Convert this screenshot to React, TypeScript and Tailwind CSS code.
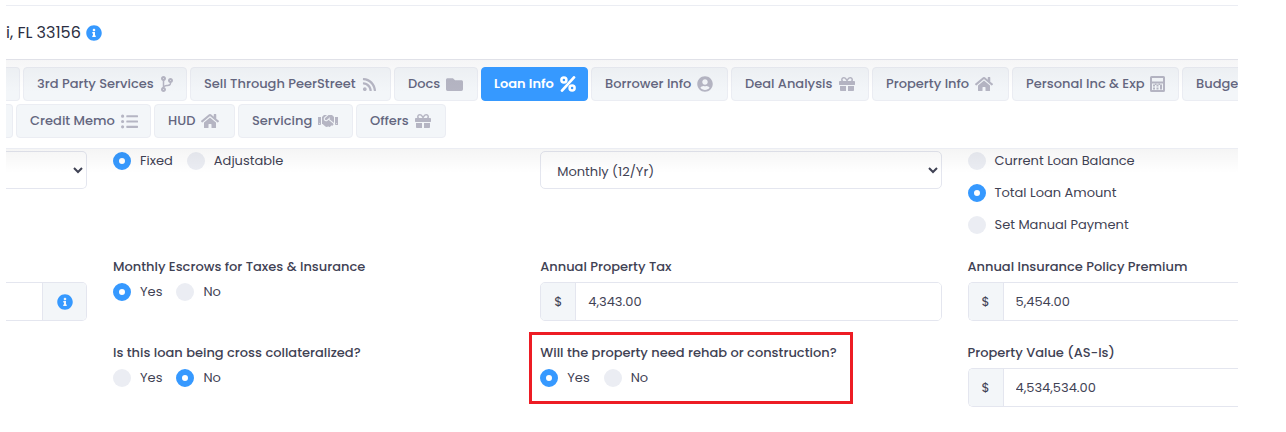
import React from "react";
import {
  FaCodeBranch,
  FaFolder,
  FaGift,
  FaHandshake,
  FaHome,
  FaInfoCircle,
  FaListUl,
  FaRss,
  FaUserCircle,
} from "react-icons/fa";

function CalculatorIcon({ className }: { className?: string }) {
  return (
    <svg viewBox="0 0 15 16" className={className} fill="currentColor" aria-hidden="true">
      <path
        fillRule="evenodd"
        d="M1.5 0h12A1.5 1.5 0 0 1 15 1.500v13a1.500 1.500 0 0 1-1.500 1.500h-12A1.500 1.500 0 0 1 0 14.500v-13A1.500 1.500 0 0 1 1.500 0ZM2 2v3.500h11V2ZM2 7.500V14h11V7.500Z"
      />
      <path d="M3 8.500h2v2H3zM6.500 8.500h2v2h-2zM10 8.500h2v5h-2zM3 11.500h2v2H3zM6.500 11.500h2v2h-2z" />
      <path d="M5 7.500h1.500V9H5zM8.500 7.500H10V9H8.500z" />
    </svg>
  );
}

function PercentIcon({ className }: { className?: string }) {
  return (
    <svg viewBox="0 0 16 16" className={className} fill="none" stroke="currentColor" aria-hidden="true">
      <circle cx="3.900" cy="3.900" r="2.500" strokeWidth="2.500" />
      <circle cx="12.100" cy="12.100" r="2.500" strokeWidth="2.500" />
      <path d="M14 1.400 2 14.600" strokeWidth="2.700" strokeLinecap="round" />
    </svg>
  );
}

type Tab = {
  label: string;
  width: string;
  icon: React.ComponentType<{ className?: string }>;
  iconSize?: string;
  active?: boolean;
};

const firstRow: Tab[] = [
  { label: "3rd Party Services", width: "w-[164px]", icon: FaCodeBranch, iconSize: "h-4 w-[14px]" },
  { label: "Sell Through PeerStreet", width: "w-[201px]", icon: FaRss, iconSize: "size-[15px]" },
  { label: "Docs", width: "w-[84px]", icon: FaFolder, iconSize: "size-[17px]" },
  { label: "Loan Info", width: "w-[107px]", icon: PercentIcon, active: true },
  { label: "Borrower Info", width: "w-[137px]", icon: FaUserCircle },
  { label: "Deal Analysis", width: "w-[138px]", icon: FaGift },
  { label: "Property Info", width: "w-[137px]", icon: FaHome, iconSize: "size-[18px]" },
  { label: "Personal Inc & Exp", width: "w-[167px]", icon: CalculatorIcon, iconSize: "h-4 w-[15px]" },
  { label: "Budget", width: "w-[110px]", icon: FaListUl },
];

const secondRow: Tab[] = [
  { label: "Credit Memo", width: "w-[135px]", icon: FaListUl, iconSize: "size-[17px]" },
  { label: "HUD", width: "w-[81px]", icon: FaHome, iconSize: "size-[18px]" },
  { label: "Servicing", width: "w-[115px]", icon: FaHandshake, iconSize: "size-[20px]" },
  { label: "Offers", width: "w-[90px]", icon: FaGift },
];

function TabRow({ tabs, lead }: { tabs: Tab[]; lead: string }) {
  return (
    <div className="flex gap-[3px]">
      <span className={`${lead} h-[34px] shrink-0 rounded-r border border-l-0 border-[#ebedf3] bg-[#f3f6f9]`} />
      {tabs.map(({ label, width, icon: Icon, iconSize, active }) => (
        <button
          key={label}
          type="button"
          className={`${width} flex h-[34px] shrink-0 items-center gap-[6px] rounded border text-[13px] whitespace-nowrap ${
            active
              ? "relative z-10 border-[#3699ff] bg-[#3699ff] pl-3 font-semibold text-white"
              : "border-[#ebedf3] bg-[#f3f6f9] pl-[13px] font-medium text-[#64667f]"
          }`}
        >
          {label}
          <Icon className={`${iconSize ?? "size-4"} shrink-0 ${active ? "text-white" : "text-[#b5b5c3]"}`} />
        </button>
      ))}
    </div>
  );
}

function Radio({ name, label, checked }: { name: string; label: string; checked?: boolean }) {
  return (
    <label className="flex h-[18px] items-center gap-[9px] whitespace-nowrap">
      <input
        type="radio"
        name={name}
        defaultChecked={checked}
        className="size-[18px] shrink-0 appearance-none rounded-full bg-[#ebedf3] checked:border-6 checked:border-[#3699ff] checked:bg-white"
      />
      {label}
    </label>
  );
}

function RadioField({ name, legend, value }: { name: string; legend: string; value: "Yes" | "No" }) {
  return (
    <fieldset>
      <legend className="mb-[5px] leading-[22px] font-medium whitespace-nowrap">{legend}</legend>
      <div className="flex gap-[14px]">
        <Radio name={name} label="Yes" checked={value === "Yes"} />
        <Radio name={name} label="No" checked={value === "No"} />
      </div>
    </fieldset>
  );
}

function MoneyField({ id, label, value, cut }: { id: string; label: string; value: string; cut?: boolean }) {
  return (
    <div>
      <label htmlFor={id} className="mb-1 block leading-[22px] font-medium whitespace-nowrap">
        {label}
      </label>
      <div
        className={`flex h-[39px] overflow-hidden border border-[#e4e6ef] ${cut ? "rounded-l-[5px] border-r-0" : "rounded-[5px]"}`}
      >
        <span className="flex w-[35px] shrink-0 items-center justify-center border-r border-[#e4e6ef] bg-[#f3f6f9]">$</span>
        <input id={id} type="text" defaultValue={value} className="min-w-0 flex-1 bg-white px-3 outline-none" />
      </div>
    </div>
  );
}

export default function App() {
  return (
    <div className="overflow-hidden bg-white pt-[5px] pr-12 pb-6 pl-[6px] font-['Poppins','Inter',sans-serif] text-[13px] text-[#3f4254]">
      <header className="flex h-[54px] items-center gap-[5px] border-t border-[#ebedf3] text-base text-[#2b2e42]">
        <span>i, FL 33156</span>
        <FaInfoCircle className="size-4 text-[#3699ff]" />
      </header>

      <nav className="relative flex h-[90px] flex-col gap-[3px] overflow-hidden border-y border-t-[#e0e1e8] border-b-[#ebedf3] pt-[7px]">
        <TabRow tabs={firstRow} lead="w-[14px]" />
        <TabRow tabs={secondRow} lead="w-[7px]" />
        <div className="pointer-events-none absolute inset-x-0 top-0 h-8 bg-linear-to-b from-[#3f4254]/5 to-transparent" />
      </nav>

      <main className="relative grid grid-cols-[81px_minmax(0,402fr)_minmax(0,402fr)_minmax(0,271fr)] gap-x-[26px] pt-[2px]">
        <div className="pointer-events-none absolute inset-x-0 top-0 z-10 h-6 bg-linear-to-b from-black/4 to-transparent" />

        <div className="h-[105px]">
          <select
            aria-label="Loan term"
            className="h-[38px] w-full rounded-r-[5px] border border-l-0 border-[#e4e6ef] bg-white"
          />
        </div>
        <div className="flex gap-[14px] pt-px">
          <Radio name="rate" label="Fixed" checked />
          <Radio name="rate" label="Adjustable" />
        </div>
        <div>
          <select
            aria-label="Payment frequency"
            className="h-[38px] w-full rounded-[5px] border border-[#e4e6ef] bg-white pt-[2px] pl-3"
          >
            <option>Monthly (12/Yr)</option>
          </select>
        </div>
        <div className="flex flex-col gap-[14px] pt-px">
          <Radio name="basis" label="Current Loan Balance" />
          <Radio name="basis" label="Total Loan Amount" checked />
          <Radio name="basis" label="Set Manual Payment" />
        </div>

        <div className="h-[86px] pt-[26px]">
          <div className="flex h-[39px] overflow-hidden rounded-r-[5px] border border-l-0 border-[#e4e6ef]">
            <input type="text" aria-label="Amount" className="min-w-0 flex-1 bg-white outline-none" />
            <button
              type="button"
              aria-label="More information"
              className="flex w-11 shrink-0 items-center justify-center border-l border-[#e4e6ef] bg-[#f3f6f9]"
            >
              <FaInfoCircle className="size-4 text-[#3699ff]" />
            </button>
          </div>
        </div>
        <RadioField name="escrows" legend="Monthly Escrows for Taxes & Insurance" value="Yes" />
        <MoneyField id="tax" label="Annual Property Tax" value="4,343.00" />
        <MoneyField id="premium" label="Annual Insurance Policy Premium" value="5,454.00" cut />

        <div />
        <RadioField name="cross" legend="Is this loan being cross collateralized?" value="No" />
        <div className="relative">
          <RadioField name="rehab" legend="Will the property need rehab or construction?" value="Yes" />
          <div className="pointer-events-none absolute -top-[10px] -left-[11px] h-[72px] w-[324px] border-3 border-[#ed1c24]" />
        </div>
        <MoneyField id="value" label="Property Value (AS-Is)" value="4,534,534.00" cut />
      </main>
    </div>
  );
}
